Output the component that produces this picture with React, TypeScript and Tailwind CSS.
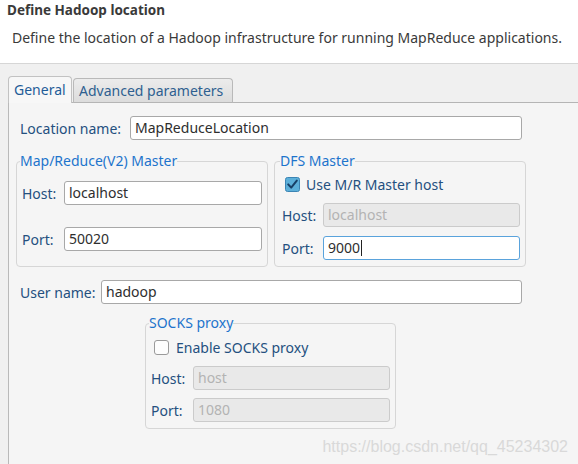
import React from "react";

function Field({
  text,
  width,
  variant = "normal",
  cursor = false,
}: {
  text: string;
  width: number;
  variant?: "normal" | "disabled" | "focused";
  cursor?: boolean;
}) {
  const cls =
    variant === "disabled"
      ? "bg-[#e9e9e9] border-[#cbcbcb] text-[#b3b3b3]"
      : variant === "focused"
      ? "bg-white border-[#5aa3dc] text-[#2e2e2e]"
      : "bg-white border-[#a8a8a8] text-[#2e2e2e]";
  return (
    <div
      className={`h-[24px] border rounded-[3px] flex items-center pl-[4px] text-[14px] leading-none ${cls}`}
      style={{ width }}
    >
      <span>{text}</span>
      {cursor && <span className="w-px h-[16px] bg-[#222] ml-[1px]" />}
    </div>
  );
}

function Check({ checked }: { checked: boolean }) {
  return checked ? (
    <svg width="15" height="15" viewBox="0 0 15 15">
      <rect x="0.5" y="0.5" width="14" height="14" rx="2" fill="#5cafd9" stroke="#3b84b4" />
      <path d="M3.2 7.4 L6.2 10.6 L11.8 3.6" fill="none" stroke="#173f66" strokeWidth="2" strokeLinecap="round" strokeLinejoin="round" />
    </svg>
  ) : (
    <svg width="15" height="15" viewBox="0 0 15 15">
      <rect x="0.5" y="0.5" width="14" height="14" rx="2.5" fill="#fdfdfd" stroke="#9a9a9a" />
    </svg>
  );
}

const label = "text-[14px] text-[#24507f]";
const legend = "-ml-[2px] px-0 text-[14px] text-[#1d74cc] leading-[20px]";

export default function App() {
  return (
    <div className="w-[578px] h-[464px] overflow-hidden relative flex flex-col bg-[#f5f5f5] font-['Noto_Sans','Open_Sans',sans-serif]">
      {/* header */}
      <div className="h-[64px] bg-white border-b border-[#d6d6d6] shrink-0">
        <div className="pl-[7px] pt-[1px] text-[13.5px] font-bold text-[#3a3a3a] leading-[18px]">
          Define Hadoop location
        </div>
        <div className="pl-[12px] mt-[9px] text-[14px] text-[#3a3a3a] leading-[20px]">
          Define the location of a Hadoop infrastructure for running MapReduce applications.
        </div>
      </div>

      {/* tabs */}
      <div className="h-[39px] bg-[#f0f0f0] flex items-end shrink-0">
        <div className="w-[8px] h-full" />
        <div className="w-[64px] h-[27px] bg-[#f7f7f7] border border-b-0 border-[#c2c2c2] rounded-t-[4px] pl-[5px] pt-[3px] text-[14px] text-[#1f5c98] leading-[20px]">
          General
        </div>
        <div className="w-[1px] h-full border-b border-[#b5b5b5]" />
        <div className="w-[160px] h-[25px] bg-gradient-to-b from-[#ececec] to-[#dcdcdc] border border-[#b9b9b9] border-b-[#b5b5b5] rounded-t-[4px] pl-[5px] pt-[2px] text-[14px] text-[#2e5f90] leading-[20px]">
          Advanced parameters
        </div>
        <div className="flex-1 h-full border-b border-[#b5b5b5]" />
      </div>

      {/* body */}
      <div className="flex flex-1 min-h-0">
        <div className="w-[8px] bg-[#f0f0f0]" />
        <div className="flex-1 border-l border-[#b9b9b9] bg-[#f5f5f5] pl-[7px]">
          {/* location name */}
          <div className="flex items-center mt-[13px] ml-[4px]">
            <div className={`${label} w-[110px]`}>Location name:</div>
            <Field text="MapReduceLocation" width={392} />
          </div>

          {/* groups */}
          <div className="flex gap-[6px] mt-[11px]">
            <fieldset className="w-[252px] h-[116px] border border-[#d6d6d6] rounded-[4px] pl-[5px]">
              <legend className={legend}>Map/Reduce(V2) Master</legend>
              <div className="flex items-center mt-[10px]">
                <div className={`${label} w-[42px]`}>Host:</div>
                <Field text="localhost" width={198} />
              </div>
              <div className="flex items-center mt-[22px]">
                <div className={`${label} w-[42px]`}>Port:</div>
                <Field text="50020" width={198} />
              </div>
            </fieldset>
            <fieldset className="w-[252px] h-[116px] border border-[#d6d6d6] rounded-[4px] pl-[7px]">
              <legend className={legend}>DFS Master</legend>
              <div className="flex items-center gap-[6px] mt-[3px] ml-[3px]">
                <Check checked />
                <span className={label}>Use M/R Master host</span>
              </div>
              <div className="flex items-center mt-[8px]">
                <div className={`${label} w-[41px]`}>Host:</div>
                <Field text="localhost" width={197} variant="disabled" />
              </div>
              <div className="flex items-center mt-[9px]">
                <div className={`${label} w-[41px]`}>Port:</div>
                <Field text="9000" width={197} variant="focused" cursor />
              </div>
            </fieldset>
          </div>

          {/* user name */}
          <div className="flex items-center mt-[13px] ml-[4px]">
            <div className={`${label} w-[81px]`}>User name:</div>
            <Field text="hadoop" width={421} />
          </div>

          {/* socks */}
          <fieldset className="w-[251px] h-[116px] border border-[#d6d6d6] rounded-[4px] ml-[129px] mt-[9px] pl-[5px]">
            <legend className={legend}>SOCKS proxy</legend>
            <div className="flex items-center gap-[7px] mt-[4px] ml-[3px]">
              <Check checked={false} />
              <span className={label}>Enable SOCKS proxy</span>
            </div>
            <div className="flex items-center mt-[8px]">
              <div className={`${label} w-[42px]`}>Host:</div>
              <Field text="host" width={197} variant="disabled" />
            </div>
            <div className="flex items-center mt-[8px]">
              <div className={`${label} w-[42px]`}>Port:</div>
              <Field text="1080" width={197} variant="disabled" />
            </div>
          </fieldset>
        </div>
      </div>

      {/* watermark */}
      <div className="absolute right-[10px] top-[437px] text-[16px] text-[#d9d9d9] font-['Liberation_Sans',Arial,sans-serif] leading-[20px]">
        https://blog.csdn.net/qq_45234302
      </div>
    </div>
  );
}
